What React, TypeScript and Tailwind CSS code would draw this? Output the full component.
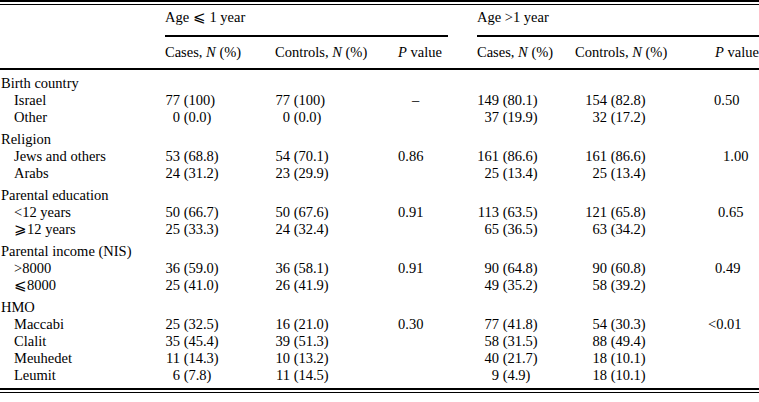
type Cell = [string, string] | null;

interface Row {
  label: string;
  c1: Cell;
  k1: Cell;
  p1?: string;
  c2: Cell;
  k2: Cell;
  p2?: string;
}

interface Group {
  title: string;
  rows: Row[];
}

const groups: Group[] = [
  {
    title: 'Birth country',
    rows: [
      { label: 'Israel', c1: ['77', '100'], k1: ['77', '100'], p1: '–', c2: ['149', '80.1'], k2: ['154', '82.8'], p2: '0.50' },
      { label: 'Other', c1: ['0', '0.0'], k1: ['0', '0.0'], c2: ['37', '19.9'], k2: ['32', '17.2'] },
    ],
  },
  {
    title: 'Religion',
    rows: [
      { label: 'Jews and others', c1: ['53', '68.8'], k1: ['54', '70.1'], p1: '0.86', c2: ['161', '86.6'], k2: ['161', '86.6'], p2: '1.00' },
      { label: 'Arabs', c1: ['24', '31.2'], k1: ['23', '29.9'], c2: ['25', '13.4'], k2: ['25', '13.4'] },
    ],
  },
  {
    title: 'Parental education',
    rows: [
      { label: '<12 years', c1: ['50', '66.7'], k1: ['50', '67.6'], p1: '0.91', c2: ['113', '63.5'], k2: ['121', '65.8'], p2: '0.65' },
      { label: '⩾12 years', c1: ['25', '33.3'], k1: ['24', '32.4'], c2: ['65', '36.5'], k2: ['63', '34.2'] },
    ],
  },
  {
    title: 'Parental income (NIS)',
    rows: [
      { label: '>8000', c1: ['36', '59.0'], k1: ['36', '58.1'], p1: '0.91', c2: ['90', '64.8'], k2: ['90', '60.8'], p2: '0.49' },
      { label: '⩽8000', c1: ['25', '41.0'], k1: ['26', '41.9'], c2: ['49', '35.2'], k2: ['58', '39.2'] },
    ],
  },
  {
    title: 'HMO',
    rows: [
      { label: 'Maccabi', c1: ['25', '32.5'], k1: ['16', '21.0'], p1: '0.30', c2: ['77', '41.8'], k2: ['54', '30.3'], p2: '<0.01' },
      { label: 'Clalit', c1: ['35', '45.4'], k1: ['39', '51.3'], c2: ['58', '31.5'], k2: ['88', '49.4'] },
      { label: 'Meuhedet', c1: ['11', '14.3'], k1: ['10', '13.2'], c2: ['40', '21.7'], k2: ['18', '10.1'] },
      { label: 'Leumit', c1: ['6', '7.8'], k1: ['11', '14.5'], c2: ['9', '4.9'], k2: ['18', '10.1'] },
    ],
  },
];

// the right-hand p values don't share a left edge in the source
const p2Offset: Record<string, string> = {
  '0.50': 'pl-[9px]',
  '1.00': 'pl-[18px]',
  '0.65': 'pl-[13px]',
  '0.49': 'pl-[10px]',
  '<0.01': 'pl-[3px]',
};

const cols = 'grid grid-cols-[165px_110px_123px_79px_98px_130px_54px]';

function Count({ cell, wide }: { cell: Cell; wide?: boolean }) {
  if (!cell) return <div />;
  return (
    <div className="whitespace-nowrap">
      <span className={`inline-block text-right ${wide ? 'w-[22px]' : 'w-[15px]'}`}>{cell[0]}</span>{' '}
      ({cell[1]})
    </div>
  );
}

function HeadCells() {
  return (
    <>
      <div className="whitespace-nowrap">
        Cases, <i>N</i> (%)
      </div>
      <div className="whitespace-nowrap">
        Controls, <i>N</i> (%)
      </div>
    </>
  );
}

export default function App() {
  return (
    <div
      className="w-[759px] h-[402px] bg-white text-black text-[14.5px] leading-[17px]"
      style={{ fontFamily: '"Liberation Serif", "DejaVu Serif", serif' }}
    >
      <div className="h-[2px] bg-black" />
      <div className="h-px bg-black mt-[2px]" />

      <header className={cols}>
        <div />
        <div className="col-span-3 flex flex-col">
          <div className="h-[30px] pt-[4px]">Age ⩽ 1 year</div>
          <div className="h-[2px] bg-black mr-[29px]" />
        </div>
        <div className="col-span-3 flex flex-col">
          <div className="h-[30px] pt-[4px]">Age &gt;1 year</div>
          <div className="h-[2px] bg-black" />
        </div>
      </header>

      <div className={`${cols} h-[31px] items-center`}>
        <div />
        <HeadCells />
        <div className="whitespace-nowrap">
          <i>P</i> value
        </div>
        <div className="whitespace-nowrap">
          Cases, <i>N</i> (%)
        </div>
        <div className="whitespace-nowrap">
          Controls, <i>N</i> (%)
        </div>
        <div className="whitespace-nowrap pl-[10px]">
          <i>P</i> value
        </div>
      </div>
      <div className="h-[2px] bg-black" />

      <main className="pt-[5px] pb-[4px] flex flex-col gap-[5px]">
        {groups.map((g) => (
          <section key={g.title}>
            <div className="h-[17px] pl-[1px] whitespace-nowrap">{g.title}</div>
            {g.rows.map((r) => (
              <div key={r.label} className={`${cols} h-[17px]`}>
                <div className="pl-[14px] whitespace-nowrap">{r.label}</div>
                <Count cell={r.c1} />
                <Count cell={r.k1} />
                <div className={r.p1 === '–' ? 'pl-[14px]' : ''}>{r.p1}</div>
                <Count cell={r.c2} wide />
                <div className="pl-[10px]">
                  <Count cell={r.k2} wide />
                </div>
                <div className={r.p2 ? p2Offset[r.p2] : ''}>{r.p2}</div>
              </div>
            ))}
          </section>
        ))}
      </main>

      <div className="h-[2px] bg-black" />
      <div className="h-px bg-black mt-[2px]" />
    </div>
  );
}
